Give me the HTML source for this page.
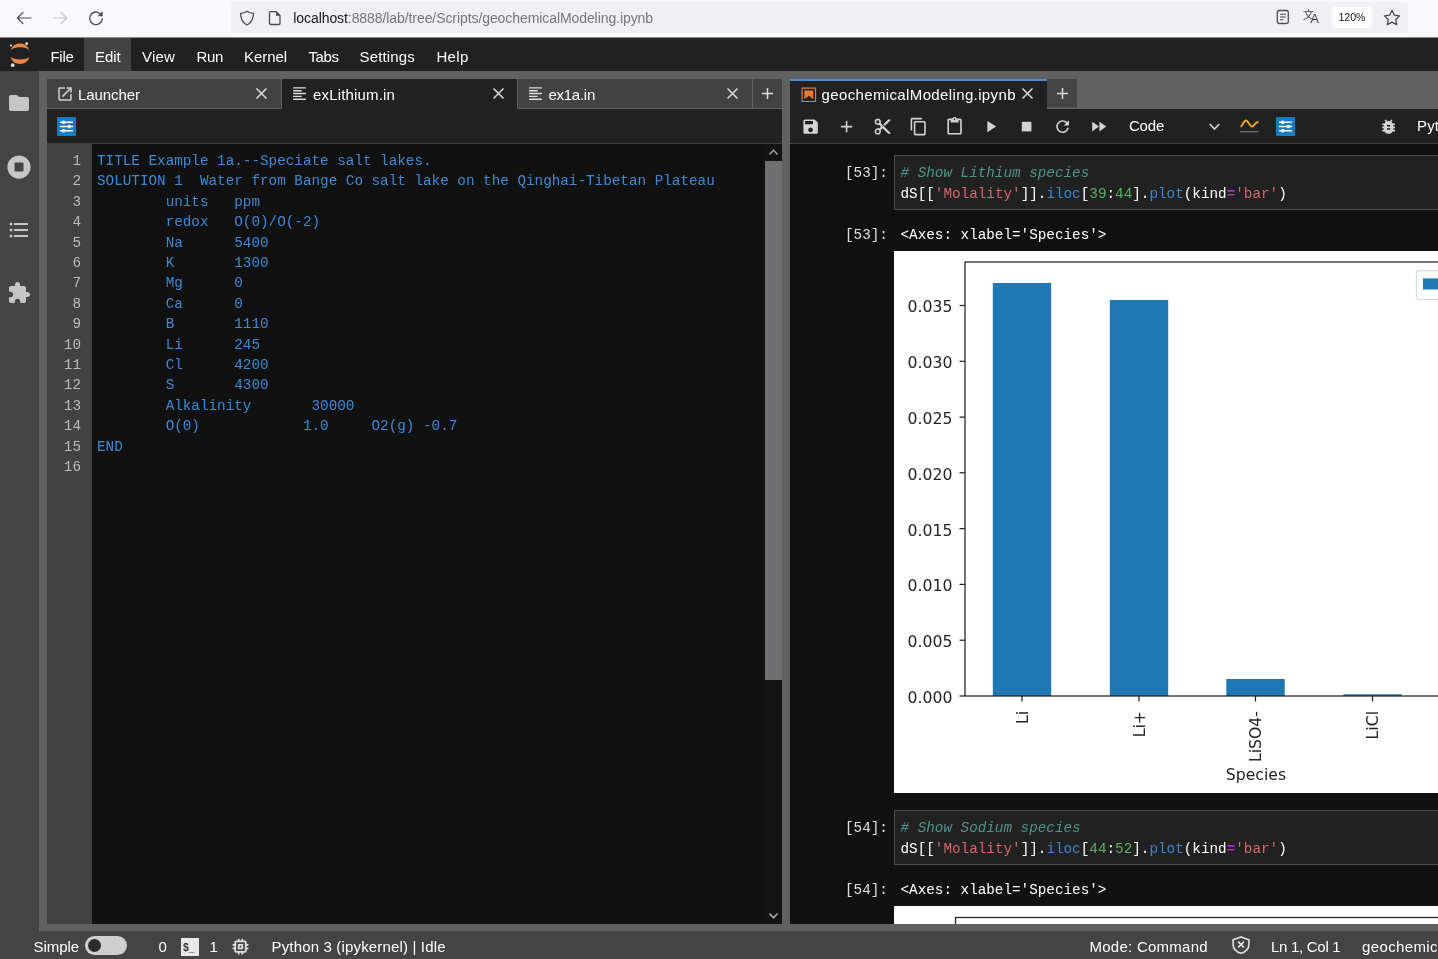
<!DOCTYPE html>
<html lang="en">
<head>
<meta charset="utf-8">
<title>geochemicalModeling.ipynb - JupyterLab</title>
<style>
*{box-sizing:border-box;margin:0;padding:0}
html,body{width:1438px;height:959px;overflow:hidden;background:#616161}
body{position:relative;font-family:"Liberation Sans",sans-serif;color:#e0e0e0}
.abs{position:absolute}
.ui{font-family:"Liberation Sans",sans-serif}
.mono{font-family:"Liberation Mono",monospace}
svg{position:absolute;overflow:visible}
/* browser chrome */
#chrome{left:0;top:0;width:1438px;height:37px;background:#f9f9fb}
#urlbar{left:231px;top:2px;width:1177px;height:31px;background:#f0f0f4;border-radius:4px}
#url{left:293.300px;top:9.500px;font-size:14px;color:#15141a;white-space:nowrap;letter-spacing:-0.080px}
#url span{color:#74747c}
#zoom{left:1332px;top:7px;width:40px;height:20.500px;background:#fff;border-radius:3px;font-size:10.600px;color:#15141a;text-align:center;line-height:21px}
/* menu */
#menubar{left:0;top:38px;width:1438px;height:33px;background:#212121}
#menubar .mi{position:absolute;top:0;height:33px;line-height:37px;font-size:15px;color:#fff;white-space:nowrap}
#editbg{left:84px;top:0;width:47px;height:33px;background:#424242}
/* sidebar */
#lside{left:0;top:71px;width:39px;height:888px;background:#444}
/* left dock */
#ltabs{left:47px;top:79px;width:735px;height:30px;background:#424242}
.tab{position:absolute;top:0;height:30px;border-right:1px solid #616161;border-bottom:1px solid #616161;background:#424242}
.tab.act{background:#212121;border-bottom:1px solid #212121}
.tablabel{position:absolute;top:6.500px;font-size:15px;color:#fff;white-space:nowrap}
#ltool{left:47px;top:109px;width:735px;height:35px;background:#212121;border-bottom:1px solid #424242}
#led{left:47px;top:144px;width:735px;height:780px;background:#111}
#gutter{left:0;top:0;width:45px;height:780px;background:#424242}
.ln{position:absolute;right:11px;width:40px;text-align:right;font-size:14.3px;color:#bdbdbd;line-height:20.4px;height:20.4px}
#code{left:50px;top:7px;font-size:14.3px;line-height:20.4px;color:#3f8ad6;white-space:pre}
#vsb{left:718px;top:0;width:17px;height:780px;background:#131314}
#vthumb{left:0;top:16.500px;width:17px;height:519px;background:#6f6f71}
/* right dock */
#rtabs{left:790px;top:79px;width:648px;height:30px;background:#616161}
#rtool{left:790px;top:109px;width:648px;height:35px;background:#212121;border-bottom:1px solid #424242}
#nb{left:790px;top:144px;width:648px;height:780px;background:#111;overflow:hidden}
.prompt{position:absolute;left:55px;font-size:14.3px;color:#e0e0e0;white-space:pre}
.cellin{position:absolute;left:104px;width:560px;height:54px;background:#212121;border:1px solid #4e4e4e}
.cellin pre{position:absolute;font-size:14.3px;line-height:20.4px;color:#fff}
.c{color:#50948a;font-style:italic}.s{color:#dc666c}.p{color:#3b88d0}.n{color:#5cb35c}.o{color:#a832d8;font-weight:bold}
.out{position:absolute;left:110.500px;font-size:14.3px;color:#fff;white-space:pre}
/* status */
#status{left:0;top:931px;width:1438px;height:28px;background:#444;overflow:hidden}
#status .st{position:absolute;top:7px;font-size:15px;color:#fff;white-space:nowrap}
body>div{will-change:transform}
</style>
</head>
<body>
<!-- BROWSER CHROME -->
<div id="chrome" class="abs">
  <div id="urlbar" class="abs"></div>
  <svg style="left:16px;top:10px" width="16" height="16" viewBox="0 0 16 16"><path d="M14.800 8H1.600M7 2.400L1.400 8L7 13.600" stroke="#4a4a4f" stroke-width="1.200" fill="none" stroke-linecap="round" stroke-linejoin="round"/></svg>
  <svg style="left:52px;top:10px" width="16" height="16" viewBox="0 0 16 16"><path d="M1.200 8H14.400M9 2.400L14.600 8L9 13.600" stroke="#c2c2c6" stroke-width="1.200" fill="none" stroke-linecap="round" stroke-linejoin="round"/></svg>
  <svg style="left:88px;top:10px" width="16" height="16" viewBox="0 0 16 16"><path d="M13.600 5.400A6.300 6.300 0 1 0 14.300 8.800" stroke="#4a4a4f" stroke-width="1.400" fill="none" stroke-linecap="round"/><path d="M14.600 1.200V6.200H9.600Z" fill="#4a4a4f"/></svg>
  <svg style="left:239px;top:9.500px" width="16" height="16" viewBox="0 0 16 16"><path d="M8 1.200C6 2.600 3.800 3.200 1.600 3.300C1.600 9 3.800 13 8 15C12.200 13 14.400 9 14.400 3.300C12.200 3.200 10 2.600 8 1.200Z" stroke="#4a4a4f" stroke-width="1.300" fill="none" stroke-linejoin="round"/></svg>
  <svg style="left:267px;top:9.500px" width="16" height="16" viewBox="0 0 16 16"><path d="M3.500 1.700H9.200L13 5.500V13.300a1.200 1.200 0 0 1-1.200 1.200H3.700a1.200 1.200 0 0 1-1.200-1.200V2.700a1 1 0 0 1 1-1Z" stroke="#4a4a4f" stroke-width="1.300" fill="none" stroke-linejoin="round"/><path d="M9 1.800V5.700H13Z" fill="#4a4a4f"/></svg>
  <div id="url" class="abs ui">localhost<span>:8888/lab/tree/Scripts/geochemicalModeling.ipynb</span></div>
  <svg style="left:1275px;top:9px" width="16" height="16" viewBox="0 0 16 16"><rect x="2.300" y="1.500" width="11" height="13" rx="1.800" stroke="#4a4a4f" stroke-width="1.300" fill="none"/><path d="M5 5.200H10.800M5 8H10.800M5 10.800H8.500" stroke="#4a4a4f" stroke-width="1.050" fill="none"/></svg>
  <div class="abs" style="left:1303px;top:7.500px;font-family:'Liberation Sans','Noto Sans CJK SC',sans-serif;font-size:11px;line-height:14px;color:#3a3a40">文</div>
  <div class="abs ui" style="left:1310.500px;top:12px;font-size:12.500px;line-height:14px;color:#3a3a40">A</div>
  <div id="zoom" class="abs ui">120%</div>
  <svg style="left:1383px;top:8.500px" width="18" height="17" viewBox="0 0 18 17"><path d="M9 1.300L11.300 6.100L16.600 6.800L12.700 10.400L13.700 15.600L9 13.100L4.300 15.600L5.300 10.400L1.400 6.800L6.700 6.100Z" stroke="#4a4a4f" stroke-width="1.300" fill="none" stroke-linejoin="round"/></svg>
</div>
<div class="abs" style="left:0;top:37px;width:1438px;height:1px;background:#8a8a8b"></div>
<!-- MENU BAR -->
<div id="menubar" class="abs">
  <div id="editbg" class="abs"></div>
  <svg id="jlogo" style="left:0;top:0" width="40" height="33" viewBox="0 38 40 33">
    <path d="M10.800 50.500C12.500 41.200 27.500 41.200 29.200 50.500C26.500 46.200 13.500 46.200 10.800 50.500Z" fill="#e8873f"/>
    <path d="M10.800 57C12.500 66.300 27.500 66.300 29.200 57C26.500 60.200 13.500 60.200 10.800 57Z" fill="#e8873f"/>
    <circle cx="26.700" cy="43.700" r="1.400" fill="#e8e8e8"/>
    <circle cx="11" cy="45.500" r="1.100" fill="#dcdcdc"/>
    <circle cx="12.700" cy="65.200" r="1.900" fill="#d8d8d8"/>
  </svg>
  <span class="mi" style="left:50.5px;letter-spacing:-0.29px">File</span>
  <span class="mi" style="left:95px;letter-spacing:-0.09px">Edit</span>
  <span class="mi" style="left:142px;letter-spacing:0.19px">View</span>
  <span class="mi" style="left:196.5px;letter-spacing:-0.34px">Run</span>
  <span class="mi" style="left:244px;letter-spacing:-0.06px">Kernel</span>
  <span class="mi" style="left:308.5px;letter-spacing:-0.42px">Tabs</span>
  <span class="mi" style="left:359.5px;letter-spacing:0.16px">Settings</span>
  <span class="mi" style="left:436.5px;letter-spacing:0.29px">Help</span>
</div>
<!-- LEFT SIDEBAR -->
<div id="lside" class="abs">
  <svg style="left:7px;top:19.800px" width="24" height="24" viewBox="0 0 24 24"><path fill="#c6c6c6" d="M10 4H4c-1.1 0-1.990.9-1.990 2L2 18c0 1.100.9 2 2 2h16c1.100 0 2-.9 2-2V8c0-1.100-.9-2-2-2h-8l-2-2z"/></svg>
  <svg style="left:7px;top:83.500px" width="24" height="24" viewBox="0 0 512 512"><path fill="#c6c6c6" d="M256 8C119 8 8 119 8 256s111 248 248 248 248-111 248-248S393 8 256 8zm96 328c0 8.800-7.200 16-16 16H176c-8.800 0-16-7.200-16-16V176c0-8.800 7.200-16 16-16h160c8.800 0 16 7.200 16 16v160z"/></svg>
  <svg style="left:7px;top:146.700px" width="24" height="24" viewBox="0 0 24 24"><path fill="#c6c6c6" d="M7,5H21V7H7V5M7,13V11H21V13H7M4,4.500A1.500,1.500 0 0,1 5.500,6A1.500,1.500 0 0,1 4,7.500A1.500,1.500 0 0,1 2.500,6A1.500,1.500 0 0,1 4,4.500M4,10.500A1.500,1.500 0 0,1 5.500,12A1.500,1.500 0 0,1 4,13.500A1.500,1.500 0 0,1 2.500,12A1.500,1.500 0 0,1 4,10.500M7,19V17H21V19H7M4,16.500A1.500,1.500 0 0,1 5.500,18A1.500,1.500 0 0,1 4,19.500A1.500,1.500 0 0,1 2.500,18A1.500,1.500 0 0,1 4,16.500Z"/></svg>
  <svg style="left:7px;top:210px" width="24" height="24" viewBox="0 0 24 24"><path fill="#c6c6c6" d="M20.500 11H19V7c0-1.100-.9-2-2-2h-4V3.500C13 2.120 11.880 1 10.500 1S8 2.120 8 3.500V5H4c-1.100 0-1.990.9-1.990 2v3.800H3.500c1.490 0 2.700 1.210 2.700 2.700s-1.210 2.700-2.700 2.700H2V20c0 1.100.9 2 2 2h3.800v-1.500c0-1.490 1.210-2.700 2.700-2.700 1.490 0 2.700 1.210 2.700 2.700V22H17c1.100 0 2-.9 2-2v-4h1.500c1.380 0 2.500-1.120 2.500-2.500S21.880 11 20.500 11z"/></svg>
</div>
<!-- LEFT DOCK -->
<div id="ltabs" class="abs">
  <div class="tab" style="left:0;width:235px">
    <svg style="left:8.500px;top:5.500px" width="18" height="18" viewBox="0 0 24 24"><path fill="#cfcfcf" d="M19 19H5V5h7V3H5c-1.110 0-2 .9-2 2v14c0 1.100.89 2 2 2h14c1.100 0 2-.9 2-2v-7h-2v7zM14 3v2h3.590l-9.830 9.830 1.410 1.410L19 6.410V10h2V3h-7z"/></svg>
    <span class="tablabel" style="left:31px;letter-spacing:-0.070px">Launcher</span><svg style="left:209.0px;top:9.0px" width="11" height="11" viewBox="0 0 11 11"><path d="M0.500 0.500L10.500 10.500M10.500 0.500L0.500 10.500" stroke="#dcdcdc" stroke-width="1.500" fill="none"/></svg></div>
  <div class="tab act" style="left:235px;width:236px"><svg style="left:8.900px;top:6px" width="17" height="17" viewBox="0 0 24 24"><path fill="#e0e0e0" d="M15 15H3v2h12v-2zm0-8H3v2h12V7zM3 13h18v-2H3v2zm0 8h18v-2H3v2zM3 3v2h18V3H3z"/></svg>
    <span class="tablabel" style="left:31px;letter-spacing:0.160px">exLithium.in</span><svg style="left:210.5px;top:9.0px" width="11" height="11" viewBox="0 0 11 11"><path d="M0.500 0.500L10.500 10.500M10.500 0.500L0.500 10.500" stroke="#dcdcdc" stroke-width="1.500" fill="none"/></svg></div>
  <div class="tab" style="left:471px;width:235px"><svg style="left:8.900px;top:6px" width="17" height="17" viewBox="0 0 24 24"><path fill="#e0e0e0" d="M15 15H3v2h12v-2zm0-8H3v2h12V7zM3 13h18v-2H3v2zm0 8h18v-2H3v2zM3 3v2h18V3H3z"/></svg>
    <span class="tablabel" style="left:30.500px;letter-spacing:-0.270px">ex1a.in</span><svg style="left:209.0px;top:9.0px" width="11" height="11" viewBox="0 0 11 11"><path d="M0.500 0.500L10.500 10.500M10.500 0.500L0.500 10.500" stroke="#dcdcdc" stroke-width="1.500" fill="none"/></svg></div>
  <div class="tab" style="left:706px;width:29px;border-right:none">
    <svg style="left:9px;top:9px" width="11" height="11" viewBox="0 0 11 11"><path d="M5.500 0V11M0 5.500H11" stroke="#dcdcdc" stroke-width="1.500" fill="none"/></svg></div>
</div>
<div id="ltool" class="abs"><svg style="left:10px;top:8px" width="19" height="19" viewBox="0 0 19 19"><rect width="19" height="19" fill="#1a7bc0"/><g stroke="#fff" stroke-width="1.400" fill="none"><path d="M3 5.300H16M3 9.500H16M3 13.700H16"/></g><g fill="#fff"><rect x="5.500" y="3.600" width="2.200" height="3.400"/><rect x="11.300" y="7.800" width="2.200" height="3.400"/><rect x="5.500" y="12" width="2.200" height="3.400"/></g></svg></div>
<div id="led" class="abs">
  <div id="gutter" class="abs"><div class="ln mono" style="top:7.0px">1</div><div class="ln mono" style="top:27.4px">2</div><div class="ln mono" style="top:47.8px">3</div><div class="ln mono" style="top:68.2px">4</div><div class="ln mono" style="top:88.6px">5</div><div class="ln mono" style="top:109.0px">6</div><div class="ln mono" style="top:129.4px">7</div><div class="ln mono" style="top:149.8px">8</div><div class="ln mono" style="top:170.2px">9</div><div class="ln mono" style="top:190.6px">10</div><div class="ln mono" style="top:211.0px">11</div><div class="ln mono" style="top:231.4px">12</div><div class="ln mono" style="top:251.8px">13</div><div class="ln mono" style="top:272.2px">14</div><div class="ln mono" style="top:292.6px">15</div><div class="ln mono" style="top:313.0px">16</div></div>
  <pre id="code" class="abs mono">TITLE Example 1a.--Speciate salt lakes.
SOLUTION 1  Water from Bange Co salt lake on the Qinghai-Tibetan Plateau
        units   ppm
        redox   O(0)/O(-2)
        Na      5400
        K       1300
        Mg      0
        Ca      0
        B       1110
        Li      245
        Cl      4200
        S       4300
        Alkalinity       30000
        O(0)            1.0     O2(g) -0.7
END
</pre>
  <div id="vsb" class="abs"><div id="vthumb" class="abs"></div>
    <svg style="left:4px;top:5px" width="9" height="6" viewBox="0 0 9 6"><path d="M0.500 5.500L4.500 1.200L8.500 5.500" stroke="#9a9a9a" stroke-width="1.600" fill="none"/></svg>
    <svg style="left:4px;top:769px" width="9" height="6" viewBox="0 0 9 6"><path d="M0.500 0.500L4.500 4.800L8.500 0.500" stroke="#a8a8a8" stroke-width="1.600" fill="none"/></svg></div>
</div>
<!-- RIGHT DOCK -->
<div id="rtabs" class="abs">
  <div class="abs" style="left:0;top:-0.500px;width:257px;height:30.500px;background:#212121;border-top:2.500px solid #4c90d0">
    <svg style="left:10px;top:5px" width="17.600" height="17.600" viewBox="0 0 22 22"><g fill="#ef7a2a"><path d="M18.700 3.300v15.400H3.300V3.300h15.400m1.500-1.500H1.800v18.300h18.300l.1-18.300z"/><path d="M16.500 16.500l-5.400-4.300-5.600 4.300v-11h11z"/></g></svg>
    <span class="tablabel" style="left:31.500px;top:5px;letter-spacing:0.370px">geochemicalModeling.ipynb</span><svg style="left:232.2px;top:7.5px" width="11" height="11" viewBox="0 0 11 11"><path d="M0.500 0.500L10.500 10.500M10.500 0.500L0.500 10.500" stroke="#dcdcdc" stroke-width="1.500" fill="none"/></svg>
  </div>
  <div class="abs" style="left:257px;top:0;width:30px;height:29px;background:#444;border-bottom:1px solid #585858">
    <svg style="left:10px;top:9px" width="11" height="11" viewBox="0 0 11 11"><path d="M5.500 0V11M0 5.500H11" stroke="#dcdcdc" stroke-width="1.500" fill="none"/></svg></div>
</div>
<div id="rtool" class="abs" style="overflow:hidden"><svg style="left:11.0px;top:8.0px" width="19.2" height="19.2" viewBox="0 0 24 24"><path fill="#d4d4d4" d="M17 3H5c-1.110 0-2 .9-2 2v14c0 1.100.89 2 2 2h14c1.100 0 2-.9 2-2V7l-4-4zm-5 16c-1.660 0-3-1.340-3-3s1.340-3 3-3 3 1.340 3 3-1.340 3-3 3zm3-10H5V5h10v4z"/></svg><svg style="left:47.0px;top:8.0px" width="19.2" height="19.2" viewBox="0 0 24 24"><path fill="#d4d4d4" d="M19 13h-6v6h-2v-6H5v-2h6V5h2v6h6v2z"/></svg><svg style="left:83.0px;top:8.0px" width="19.2" height="19.2" viewBox="0 0 24 24"><path fill="#d4d4d4" d="M9.640 7.640c.23-.5.36-1.050.36-1.640 0-2.210-1.790-4-4-4S2 3.790 2 6s1.790 4 4 4c.59 0 1.140-.13 1.640-.36L10 12l-2.360 2.360C7.140 14.130 6.590 14 6 14c-2.210 0-4 1.790-4 4s1.790 4 4 4 4-1.790 4-4c0-.59-.13-1.140-.36-1.640L12 14l7 7h3v-1L9.640 7.640zM6 8c-1.100 0-2-.89-2-2s.9-2 2-2 2 .89 2 2-.9 2-2 2zm0 12c-1.100 0-2-.89-2-2s.9-2 2-2 2 .89 2 2-.9 2-2 2zm6-7.500c-.28 0-.5-.22-.5-.5s.22-.5.5-.5.5.22.5.5-.22.5-.5.5zM19 3l-6 6 2 2 7-7V3z"/></svg><svg style="left:119.0px;top:8.0px" width="19.2" height="19.2" viewBox="0 0 24 24"><path fill="#d4d4d4" d="M16 1H4c-1.100 0-2 .9-2 2v14h2V3h12V1zm3 4H8c-1.100 0-2 .9-2 2v14c0 1.100.9 2 2 2h11c1.100 0 2-.9 2-2V7c0-1.100-.9-2-2-2zm0 16H8V7h11v14z"/></svg><svg style="left:155.0px;top:8.0px" width="19.2" height="19.2" viewBox="0 0 24 24"><path fill="#d4d4d4" d="M19 2h-4.180C14.400.84 13.300 0 12 0c-1.300 0-2.400.84-2.820 2H5c-1.100 0-2 .9-2 2v16c0 1.100.9 2 2 2h14c1.100 0 2-.9 2-2V4c0-1.100-.9-2-2-2zm-7 0c.55 0 1 .45 1 1s-.45 1-1 1-1-.45-1-1 .45-1 1-1zm7 18H5V4h2v3h10V4h2v16z"/></svg><svg style="left:191.0px;top:8.0px" width="19.2" height="19.2" viewBox="0 0 24 24"><path fill="#d4d4d4" d="M8 5v14l11-7z"/></svg><svg style="left:227.0px;top:8.0px" width="19.2" height="19.2" viewBox="0 0 24 24"><path fill="#d4d4d4" d="M6 6h12v12H6z"/></svg><svg style="left:263.0px;top:8.0px" width="19.2" height="19.2" viewBox="0 0 18 18"><path fill="#d4d4d4" d="M9 13.500c-2.490 0-4.500-2.010-4.500-4.500S6.510 4.500 9 4.500c1.240 0 2.360.52 3.170 1.330L10 8h5V3l-1.760 1.760C12.150 3.680 10.660 3 9 3 5.690 3 3.010 5.690 3.010 9S5.690 15 9 15c2.970 0 5.430-2.160 5.900-5h-1.520c-.46 2-2.240 3.500-4.380 3.500z"/></svg><svg style="left:299.2px;top:8.0px" width="19.2" height="19.2" viewBox="0 0 24 24"><path fill="#d4d4d4" d="M4 18l8.500-6L4 6v12zm9-12v12l8.500-6L13 6z"/></svg><span class="abs ui" style="left:339px;top:8px;font-size:15px;letter-spacing:-0.210px;color:#fff">Code</span><svg style="left:418.500px;top:13.500px" width="11" height="8" viewBox="0 0 11 8"><path d="M0.700 1L5.500 6L10.300 1" stroke="#d4d4d4" stroke-width="1.700" fill="none"/></svg><svg style="left:450px;top:9px" width="19" height="16" viewBox="0 0 19 16"><path d="M0.500 8.500C2.500 8.500 3.500 2.500 6 2.500S9.500 8.500 12 8.500 14.500 4 18.500 4" stroke="#f5a623" stroke-width="1.900" fill="none"/><path d="M0 13.700H18.500" stroke="#777" stroke-width="1.200"/></svg><svg style="left:486px;top:8px" width="19" height="19" viewBox="0 0 19 19"><rect width="19" height="19" fill="#1a7bc0"/><g stroke="#fff" stroke-width="1.400" fill="none"><path d="M3 5.300H16M3 9.500H16M3 13.700H16"/></g><g fill="#fff"><rect x="5.500" y="3.600" width="2.200" height="3.400"/><rect x="11.300" y="7.800" width="2.200" height="3.400"/><rect x="5.500" y="12" width="2.200" height="3.400"/></g></svg><svg style="left:588.9px;top:8.0px" width="19.2" height="19.2" viewBox="0 0 24 24"><path fill="#d4d4d4" d="M20 8h-2.810c-.45-.78-1.070-1.450-1.820-1.960L17 4.410 15.590 3l-2.170 2.170C12.960 5.060 12.490 5 12 5c-.49 0-.96.06-1.410.17L8.410 3 7 4.410l1.620 1.630C7.880 6.550 7.260 7.220 6.810 8H4v2h2.090c-.05.33-.09.66-.09 1v1H4v2h2v1c0 .34.04.67.09 1H4v2h2.810c1.040 1.790 2.970 3 5.190 3s4.150-1.210 5.190-3H20v-2h-2.090c.05-.33.09-.66.090-1v-1h2v-2h-2v-1c0-.34-.04-.67-.09-1H20V8zm-6 8h-4v-2h4v2zm0-4h-4v-2h4v2z"/></svg><span class="abs ui" style="left:627px;top:8px;font-size:15px;letter-spacing:0.160px;color:#fff;white-space:nowrap">Python 3 (ipykernel)</span></div>
<div id="nb" class="abs">
  <div class="prompt mono" style="top:19.2px;line-height:20.400px">[53]:</div>
  <div class="cellin" style="top:11px;height:55px"><pre class="mono" style="left:5.500px;top:7.200px"><span class="c"># Show Lithium species</span>
dS[[<span class="s">'Molality'</span>]].<span class="p">iloc</span>[<span class="n">39</span>:<span class="n">44</span>].<span class="p">plot</span>(kind<span class="o">=</span><span class="s">'bar'</span>)</pre></div>
  <div class="prompt mono" style="top:80.8px;line-height:20.400px">[53]:</div>
  <div class="out mono" style="left:110.500px;top:80.8px;line-height:20.400px">&lt;Axes: xlabel='Species'&gt;</div><svg class="chart" style="left:104px;top:107px;font-family:'DejaVu Sans',sans-serif" width="544" height="542" viewBox="0 0 544 542"><rect x="0" y="0" width="700" height="542" fill="#fff"/><rect x="98.8" y="32.0" width="58.400" height="413.0" fill="#1f77b4"/><rect x="215.8" y="49.0" width="58.400" height="396.0" fill="#1f77b4"/><rect x="332.3" y="428.0" width="58.400" height="17.0" fill="#1f77b4"/><rect x="449.3" y="443.3" width="58.400" height="1.7" fill="#1f77b4"/><rect x="566.3" y="444.7" width="58.400" height="0.3" fill="#1f77b4"/><rect x="71" y="11" width="585" height="434" fill="none" stroke="#222" stroke-width="1.250"/><path d="M71 445.0h-5.500" stroke="#222" stroke-width="1.250"/><text x="58.5" y="451.9" text-anchor="end" font-size="15.700" fill="#222">0.000</text><path d="M71 389.2h-5.500" stroke="#222" stroke-width="1.250"/><text x="58.5" y="396.1" text-anchor="end" font-size="15.700" fill="#222">0.005</text><path d="M71 333.4h-5.500" stroke="#222" stroke-width="1.250"/><text x="58.5" y="340.3" text-anchor="end" font-size="15.700" fill="#222">0.010</text><path d="M71 277.6h-5.500" stroke="#222" stroke-width="1.250"/><text x="58.5" y="284.5" text-anchor="end" font-size="15.700" fill="#222">0.015</text><path d="M71 221.8h-5.500" stroke="#222" stroke-width="1.250"/><text x="58.5" y="228.7" text-anchor="end" font-size="15.700" fill="#222">0.020</text><path d="M71 166.1h-5.500" stroke="#222" stroke-width="1.250"/><text x="58.5" y="173.0" text-anchor="end" font-size="15.700" fill="#222">0.025</text><path d="M71 110.3h-5.500" stroke="#222" stroke-width="1.250"/><text x="58.5" y="117.2" text-anchor="end" font-size="15.700" fill="#222">0.030</text><path d="M71 54.5h-5.500" stroke="#222" stroke-width="1.250"/><text x="58.5" y="61.4" text-anchor="end" font-size="15.700" fill="#222">0.035</text><path d="M128.0 445v5.500" stroke="#222" stroke-width="1.250"/><text transform="translate(133.8 460) rotate(-90)" text-anchor="end" font-size="15.700" fill="#222">Li</text><path d="M245.0 445v5.500" stroke="#222" stroke-width="1.250"/><text transform="translate(250.8 460) rotate(-90)" text-anchor="end" font-size="15.700" fill="#222">Li+</text><path d="M361.5 445v5.500" stroke="#222" stroke-width="1.250"/><text transform="translate(367.3 460) rotate(-90)" text-anchor="end" font-size="15.700" fill="#222">LiSO4-</text><path d="M478.5 445v5.500" stroke="#222" stroke-width="1.250"/><text transform="translate(484.3 460) rotate(-90)" text-anchor="end" font-size="15.700" fill="#222">LiCl</text><path d="M595.5 445v5.500" stroke="#222" stroke-width="1.250"/><text transform="translate(601.3 460) rotate(-90)" text-anchor="end" font-size="15.700" fill="#222">LiOH</text><text x="362" y="529" text-anchor="middle" font-size="15.700" fill="#222">Species</text><rect x="522.4" y="19.6" width="120" height="29" rx="3" fill="#fff" stroke="#dadada" stroke-width="1.100"/><rect x="529" y="27.4" width="31" height="11.100" fill="#1f77b4"/><text x="573" y="39" font-size="15.700" fill="#222">Molality</text></svg>
  <div class="prompt mono" style="top:674.2px;line-height:20.400px">[54]:</div>
  <div class="cellin" style="top:666px;height:55px"><pre class="mono" style="left:5.500px;top:7.200px"><span class="c"># Show Sodium species</span>
dS[[<span class="s">'Molality'</span>]].<span class="p">iloc</span>[<span class="n">44</span>:<span class="n">52</span>].<span class="p">plot</span>(kind<span class="o">=</span><span class="s">'bar'</span>)</pre></div>
  <div class="prompt mono" style="top:735.8px;line-height:20.400px">[54]:</div>
  <div class="out mono" style="left:110.500px;top:735.8px;line-height:20.400px">&lt;Axes: xlabel='Species'&gt;</div><svg class="chart" style="left:104px;top:762px;font-family:'DejaVu Sans',sans-serif" width="544" height="30" viewBox="0 0 544 30"><rect x="0" y="0" width="700" height="542" fill="#fff"/><rect x="61.500" y="11.500" width="600" height="434" fill="none" stroke="#222" stroke-width="1.250"/></svg>
</div>
<!-- STATUS BAR -->
<div id="status" class="abs">
  <span class="st" style="left:33.5px;letter-spacing:-0.04px">Simple</span>
  <div class="abs" style="left:85px;top:5px;width:42px;height:19px;border-radius:10px;background:#cfcfcf"><div class="abs" style="left:3px;top:3px;width:13px;height:13px;border-radius:50%;background:#2b2b2b"></div></div>
  <span class="st" style="left:158.5px;letter-spacing:-0.34px">0</span>
  <svg style="left:181px;top:7px" width="18" height="18" viewBox="0 0 18 18"><rect width="18" height="18" fill="#e8e8e8"/><text x="2" y="13" font-size="10.500" font-weight="bold" font-family="Liberation Sans, sans-serif" fill="#333">$_</text></svg>
  <span class="st" style="left:209.5px;letter-spacing:0px">1</span>
  <svg style="left:229.500px;top:4.500px" width="21" height="21" viewBox="0 0 24 24"><path fill="#e0e0e0" d="M15 9H9v6h6V9zm-2 4h-2v-2h2v2zm8-2V9h-2V7c0-1.100-.9-2-2-2h-2V3h-2v2h-2V3H9v2H7c-1.100 0-2 .9-2 2v2H3v2h2v2H3v2h2v2c0 1.100.9 2 2 2h2v2h2v-2h2v2h2v-2h2c1.100 0 2-.9 2-2v-2h2v-2h-2v-2h2zm-4 6H7V7h10v10z"/></svg>
  <span class="st" style="left:271.5px;letter-spacing:0.16px">Python 3 (ipykernel) | Idle</span>
  <span class="st" style="left:1089.5px;letter-spacing:0.26px">Mode: Command</span>
  <svg style="left:1231.500px;top:4.500px" width="18" height="18" viewBox="0 0 18 18"><path fill="none" stroke="#e4e4e4" stroke-width="1.600" stroke-linejoin="round" d="M9 0.900L1.100 3.700V8.300C1.100 12.700 4.300 16 9 17.200C13.700 16 16.900 12.700 16.900 8.300V3.700Z"/><path d="M6.100 5.700L11.900 11.500M11.900 5.700L6.100 11.500" stroke="#e4e4e4" stroke-width="1.700" fill="none"/></svg>
  <span class="st" style="left:1271px;letter-spacing:-0.29px">Ln 1, Col 1</span>
  <span class="st" style="left:1362px;letter-spacing:0.37px">geochemicalModeling.ipynb</span>
</div>
</body>
</html>
